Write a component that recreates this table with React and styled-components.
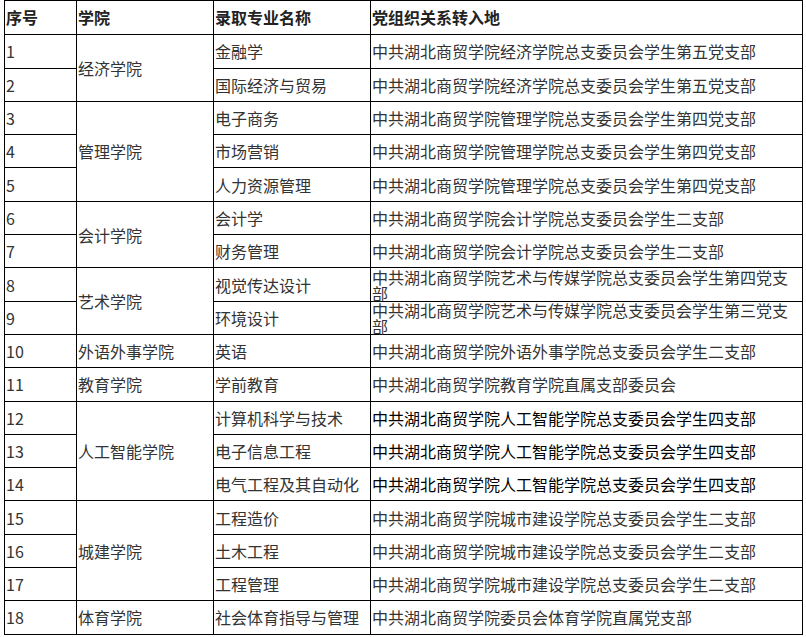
import React from "react";
import styled, { createGlobalStyle } from "styled-components";

const GlobalStyle = createGlobalStyle`
  html, body {
    margin: 0;
    padding: 0;
    background: #fff;
  }
  body {
    font-family: "Noto Sans CJK SC", "Noto Sans", sans-serif;
    font-size: 16px;
    color: #333;
  }
`;

const colleges = [
  { name: "经济学院", rows: [
    ["1", "金融学", "中共湖北商贸学院经济学院总支委员会学生第五党支部"],
    ["2", "国际经济与贸易", "中共湖北商贸学院经济学院总支委员会学生第五党支部"],
  ] },
  { name: "管理学院", rows: [
    ["3", "电子商务", "中共湖北商贸学院管理学院总支委员会学生第四党支部"],
    ["4", "市场营销", "中共湖北商贸学院管理学院总支委员会学生第四党支部"],
    ["5", "人力资源管理", "中共湖北商贸学院管理学院总支委员会学生第四党支部"],
  ] },
  { name: "会计学院", rows: [
    ["6", "会计学", "中共湖北商贸学院会计学院总支委员会学生二支部"],
    ["7", "财务管理", "中共湖北商贸学院会计学院总支委员会学生二支部"],
  ] },
  { name: "艺术学院", rows: [
    ["8", "视觉传达设计", "中共湖北商贸学院艺术与传媒学院总支委员会学生第四党支部"],
    ["9", "环境设计", "中共湖北商贸学院艺术与传媒学院总支委员会学生第三党支部"],
  ] },
  { name: "外语外事学院", rows: [
    ["10", "英语", "中共湖北商贸学院外语外事学院总支委员会学生二支部"],
  ] },
  { name: "教育学院", rows: [
    ["11", "学前教育", "中共湖北商贸学院教育学院直属支部委员会"],
  ] },
  { name: "人工智能学院", dark: true, rows: [
    ["12", "计算机科学与技术", "中共湖北商贸学院人工智能学院总支委员会学生四支部"],
    ["13", "电子信息工程", "中共湖北商贸学院人工智能学院总支委员会学生四支部"],
    ["14", "电气工程及其自动化", "中共湖北商贸学院人工智能学院总支委员会学生四支部"],
  ] },
  { name: "城建学院", rows: [
    ["15", "工程造价", "中共湖北商贸学院城市建设学院总支委员会学生二支部"],
    ["16", "土木工程", "中共湖北商贸学院城市建设学院总支委员会学生二支部"],
    ["17", "工程管理", "中共湖北商贸学院城市建设学院总支委员会学生二支部"],
  ] },
  { name: "体育学院", rows: [
    ["18", "社会体育指导与管理", "中共湖北商贸学院委员会体育学院直属党支部"],
  ] },
];

export default function App() {
  return (
    <Page>
      <GlobalStyle />
      <Table>
        <colgroup>
          <col style={{ width: 72 }} />
          <col style={{ width: 137 }} />
          <col style={{ width: 157 }} />
          <col style={{ width: 432 }} />
        </colgroup>
        <thead>
          <tr>
            <Head>序号</Head>
            <Head>学院</Head>
            <Head>录取专业名称</Head>
            <Head>党组织关系转入地</Head>
          </tr>
        </thead>
        <tbody>
          {colleges.map(college =>
            college.rows.map(([no, major, party], i) => (
              <tr key={no}>
                <Cell>{no}</Cell>
                {i === 0 && <Cell rowSpan={college.rows.length}>{college.name}</Cell>}
                <Cell>{major}</Cell>
                <PartyCell $dark={college.dark}>{party}</PartyCell>
              </tr>
            ))
          )}
        </tbody>
      </Table>
      <Note>注：未按时报到和未缴纳党费的学生党员组织关系暂缓转接</Note>
    </Page>
  );
}

const Page = styled.div`
  padding: 0 4px;
`;

const Table = styled.table`
  border-collapse: collapse;
  table-layout: fixed;
  width: 798px;
`;

const Head = styled.th`
  height: 32.3px;
  padding: 0 1px 1px;
  border: 1px solid #000;
  text-align: left;
  vertical-align: middle;
  font-weight: bold;
  color: #222;
  line-height: 17px;
`;

const Cell = styled.td`
  height: 32.3px;
  padding: 0 1px;
  border: 1px solid #000;
  vertical-align: middle;
  line-height: 16px;
  color: #333;
  white-space: nowrap;
`;

const PartyCell = styled(Cell)`
  white-space: normal;
  padding-right: 4px;
  color: ${props => (props.$dark ? "#000" : "#333")};
`;

const Note = styled.p`
  margin: 0;
  line-height: 20px;
  color: #333;
`;
